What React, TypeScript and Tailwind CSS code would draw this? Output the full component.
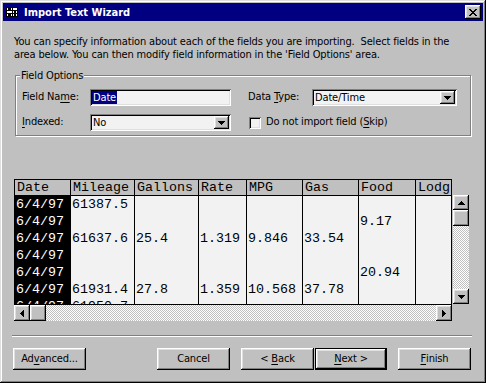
import React from "react";

const UI = "font-['DejaVu_Sans_Condensed','Liberation_Sans',sans-serif] text-[11px] tracking-[-0.15px]";
const MONO = "font-['Liberation_Mono','Courier_New',monospace] text-[13.33px] tracking-normal";
const RAISED =
  "bg-[#c0c0c0] shadow-[inset_-1px_-1px_#000,inset_1px_1px_#fff,inset_-2px_-2px_#808080,inset_2px_2px_#dfdfdf]";
const SUNK =
  "shadow-[inset_1px_1px_#808080,inset_-1px_-1px_#fff,inset_2px_2px_#000,inset_-2px_-2px_#dfdfdf]";
const CHECKER =
  "bg-[#c0c0c0] bg-[image:repeating-conic-gradient(#c0c0c0_0%_25%,#ffffff_0%_50%)] bg-[length:2px_2px]";

function Arrow({ dir }: { dir: "up" | "down" | "left" | "right" }) {
  const rows = [7, 5, 3, 1];
  if (dir === "up" || dir === "down") {
    return (
      <svg width="7" height="4" viewBox="0 0 7 4" shapeRendering="crispEdges">
        {rows.map((w, i) => (
          <rect key={i} x={(7 - w) / 2} y={dir === "down" ? i : 3 - i} width={w} height={1} fill="#000" />
        ))}
      </svg>
    );
  }
  return (
    <svg width="4" height="7" viewBox="0 0 4 7" shapeRendering="crispEdges">
      {rows.map((h, i) => (
        <rect key={i} y={(7 - h) / 2} x={dir === "right" ? i : 3 - i} height={h} width={1} fill="#000" />
      ))}
    </svg>
  );
}

function CloseGlyph() {
  const pat = ["11000011", "01100110", "00111100", "00011000", "00111100", "01100110", "11000011"];
  return (
    <svg width="8" height="7" viewBox="0 0 8 7" shapeRendering="crispEdges">
      {pat.flatMap((r, y) =>
        r.split("").map((c, x) => (c === "1" ? <rect key={`${x}-${y}`} x={x} y={y} width={1} height={1} fill="#000" /> : null))
      )}
    </svg>
  );
}

function TitleIcon() {
  return (
    <svg width="12" height="10" viewBox="0 0 12 10" shapeRendering="crispEdges">
      <rect x="0" y="0" width="12" height="10" fill="#fff" />
      <rect x="0" y="0" width="12" height="1" fill="#000" />
      <rect x="0" y="9" width="12" height="1" fill="#000" />
      <rect x="0" y="0" width="1" height="10" fill="#000" />
      <rect x="11" y="0" width="1" height="10" fill="#000" />
      <rect x="6" y="0" width="1" height="10" fill="#000" />
      <rect x="0" y="3" width="12" height="1" fill="#000" />
      <rect x="0" y="6" width="12" height="1" fill="#000" />
      <rect x="2" y="1" width="3" height="2" fill="#000" />
      <rect x="8" y="4" width="2" height="2" fill="#000" />
      <rect x="2" y="7" width="3" height="2" fill="#000" />
      <rect x="8" y="7" width="2" height="2" fill="#000" />
    </svg>
  );
}

function U({ children }: { children: React.ReactNode }) {
  return <span className="underline underline-offset-[2px]">{children}</span>;
}

function Button({
  children,
  className = "",
  def = false,
}: {
  children: React.ReactNode;
  className?: string;
  def?: boolean;
}) {
  return (
    <div
      className={`h-[22px] flex items-center justify-center text-black whitespace-pre ${RAISED} ${
        def ? "border border-black" : ""
      } ${className}`}
    >
      {children}
    </div>
  );
}

function Combo({ value, width }: { value: string; width: string }) {
  return (
    <div className={`${width} h-[17px] bg-[#f2f2f2] ${SUNK} p-[2px] flex items-center`}>
      <div className="flex-1 pl-[1px] leading-[13px]">{value}</div>
      <div className={`w-[15px] h-[13px] ${RAISED} flex items-center justify-center`}>
        <Arrow dir="down" />
      </div>
    </div>
  );
}

type Col = { name: string; w: string; cells: string[]; date?: boolean };

const cols: Col[] = [
  { name: "Date", w: "w-[56px]", cells: ["6/4/97", "6/4/97", "6/4/97", "6/4/97", "6/4/97", "6/4/97", "6/4/97"], date: true },
  { name: "Mileage", w: "w-[64px]", cells: ["61387.5", "", "61637.6", "", "", "61931.4", "61950.7"] },
  { name: "Gallons", w: "w-[64px]", cells: ["", "", "25.4", "", "", "27.8", ""] },
  { name: "Rate", w: "w-[48px]", cells: ["", "", "1.319", "", "", "1.359", ""] },
  { name: "MPG", w: "w-[56px]", cells: ["", "", "9.846", "", "", "10.568", ""] },
  { name: "Gas", w: "w-[56px]", cells: ["", "", "33.54", "", "", "37.78", ""] },
  { name: "Food", w: "w-[57px]", cells: ["", "9.17", "", "", "20.94", "", ""] },
  { name: "Lodg", w: "w-[36px]", cells: ["", "", "", "", "", "", ""] },
];

export default function App() {
  return (
    <div
      className={`w-[486px] h-[383px] bg-[#c0c0c0] p-[3px] overflow-hidden shadow-[inset_-1px_-1px_#000,inset_1px_1px_#dfdfdf,inset_-2px_-2px_#808080,inset_2px_2px_#fff] ${UI} text-black`}
    >
      {/* Title bar */}
      <div className="h-[18px] bg-[#000080] flex items-center pl-[3px] pr-[2px]">
        <TitleIcon />
        <div className="ml-[6px] font-bold text-white text-[11px] tracking-normal leading-[13px] flex-1">
          Import Text Wizard
        </div>
        <div className={`w-[16px] h-[14px] ${RAISED} flex items-center justify-center`}>
          <CloseGlyph />
        </div>
      </div>

      {/* Body */}
      <div className="pl-[11px]">
        <p className="mt-[14px] leading-[13px]">
          You can specify information about each of the fields you are importing.&nbsp; Select fields in the
          <br />
          area below. You can then modify field information in the 'Field Options' area.
        </p>

        <fieldset className="mt-[8px] ml-[1px] w-[456px] border border-[#808080] shadow-[inset_1px_1px_#fff,1px_1px_#fff] px-[6px] pt-[7px] pb-[4px]">
          <legend className="-ml-[2px] px-[1px] leading-[13px] bg-[#c0c0c0]">Field Options</legend>
          <div className="flex items-center h-[17px]">
            <div className="w-[68px]">
              Field Na<U>m</U>e:
            </div>
            <div className={`w-[141px] h-[17px] bg-[#f2f2f2] ${SUNK} p-[2px] flex items-center`}>
              <span className="bg-[#000080] text-white leading-[13px] pl-[1px] pr-[1px]">Date</span>
            </div>
            <div className="ml-[17px] w-[64px]">
              Data <U>T</U>ype:
            </div>
            <Combo value="Date/Time" width="w-[145px]" />
          </div>
          <div className="flex items-center h-[17px] mt-[8px]">
            <div className="w-[68px]">
              <U>I</U>ndexed:
            </div>
            <Combo value="No" width="w-[141px]" />
            <div className={`ml-[18px] w-[12px] h-[12px] bg-[#f2f2f2] ${SUNK}`} />
            <div className="ml-[5px]">
              Do not import field (<U>S</U>kip)
            </div>
          </div>
        </fieldset>

        {/* Data grid */}
        <div className="mt-[43px] w-[457px] h-[142px] flex flex-col">
          <div className="flex h-[126px]">
            <div className={`w-[438px] h-[126px] border-r border-b border-black flex overflow-hidden ${MONO}`}>
              {cols.map((c) => (
                <div key={c.name} className={`${c.w} shrink-0 border-l border-black flex flex-col`}>
                  <div className="h-[17px] shrink-0 border-t border-b border-black bg-[#c0c0c0] pl-[2px] leading-[15px] whitespace-nowrap overflow-hidden">
                    {c.name}
                  </div>
                  {c.cells.map((v, i) => (
                    <div
                      key={i}
                      className={`h-[17px] shrink-0 leading-[17px] pl-[1px] whitespace-nowrap overflow-hidden ${
                        c.date ? "bg-black text-white" : "bg-[#f2f2f2] text-black"
                      }`}
                    >
                      {v}
                    </div>
                  ))}
                </div>
              ))}
            </div>
            <div className="ml-[1px] mt-[16px] w-[16px] h-[109px] flex flex-col">
              <div className={`h-[15px] ${RAISED} flex items-center justify-center`}>
                <Arrow dir="up" />
              </div>
              <div className={`h-[16px] ${RAISED}`} />
              <div className={`flex-1 ${CHECKER}`} />
              <div className={`h-[15px] ${RAISED} flex items-center justify-center`}>
                <Arrow dir="down" />
              </div>
            </div>
          </div>
          <div className="flex h-[16px]">
            <div className="w-[438px] flex">
              <div className={`w-[16px] ${RAISED} flex items-center justify-center`}>
                <Arrow dir="left" />
              </div>
              <div className={`w-[16px] ${RAISED}`} />
              <div className={`flex-1 ${CHECKER}`} />
              <div className={`w-[16px] ${RAISED} flex items-center justify-center`}>
                <Arrow dir="right" />
              </div>
            </div>
          </div>
        </div>
      </div>

      {/* Separator */}
      <div className="mt-[14px] ml-[9px] w-[460px] border-t border-[#808080] border-b border-b-white" />

      {/* Buttons */}
      <div className="mt-[11px] flex">
        <Button className="ml-[10px] w-[73px]">
          Ad<U>v</U>anced...
        </Button>
        <Button className="ml-[71px] w-[73px]">Cancel</Button>
        <Button className="ml-[11px] w-[73px]">
          {"< "}
          <U>B</U>ack
        </Button>
        <Button def className="ml-[1px] w-[72px]">
          <U>N</U>ext{" >"}
        </Button>
        <Button className="ml-[11px] w-[73px]">
          <U>F</U>inish
        </Button>
      </div>
    </div>
  );
}
